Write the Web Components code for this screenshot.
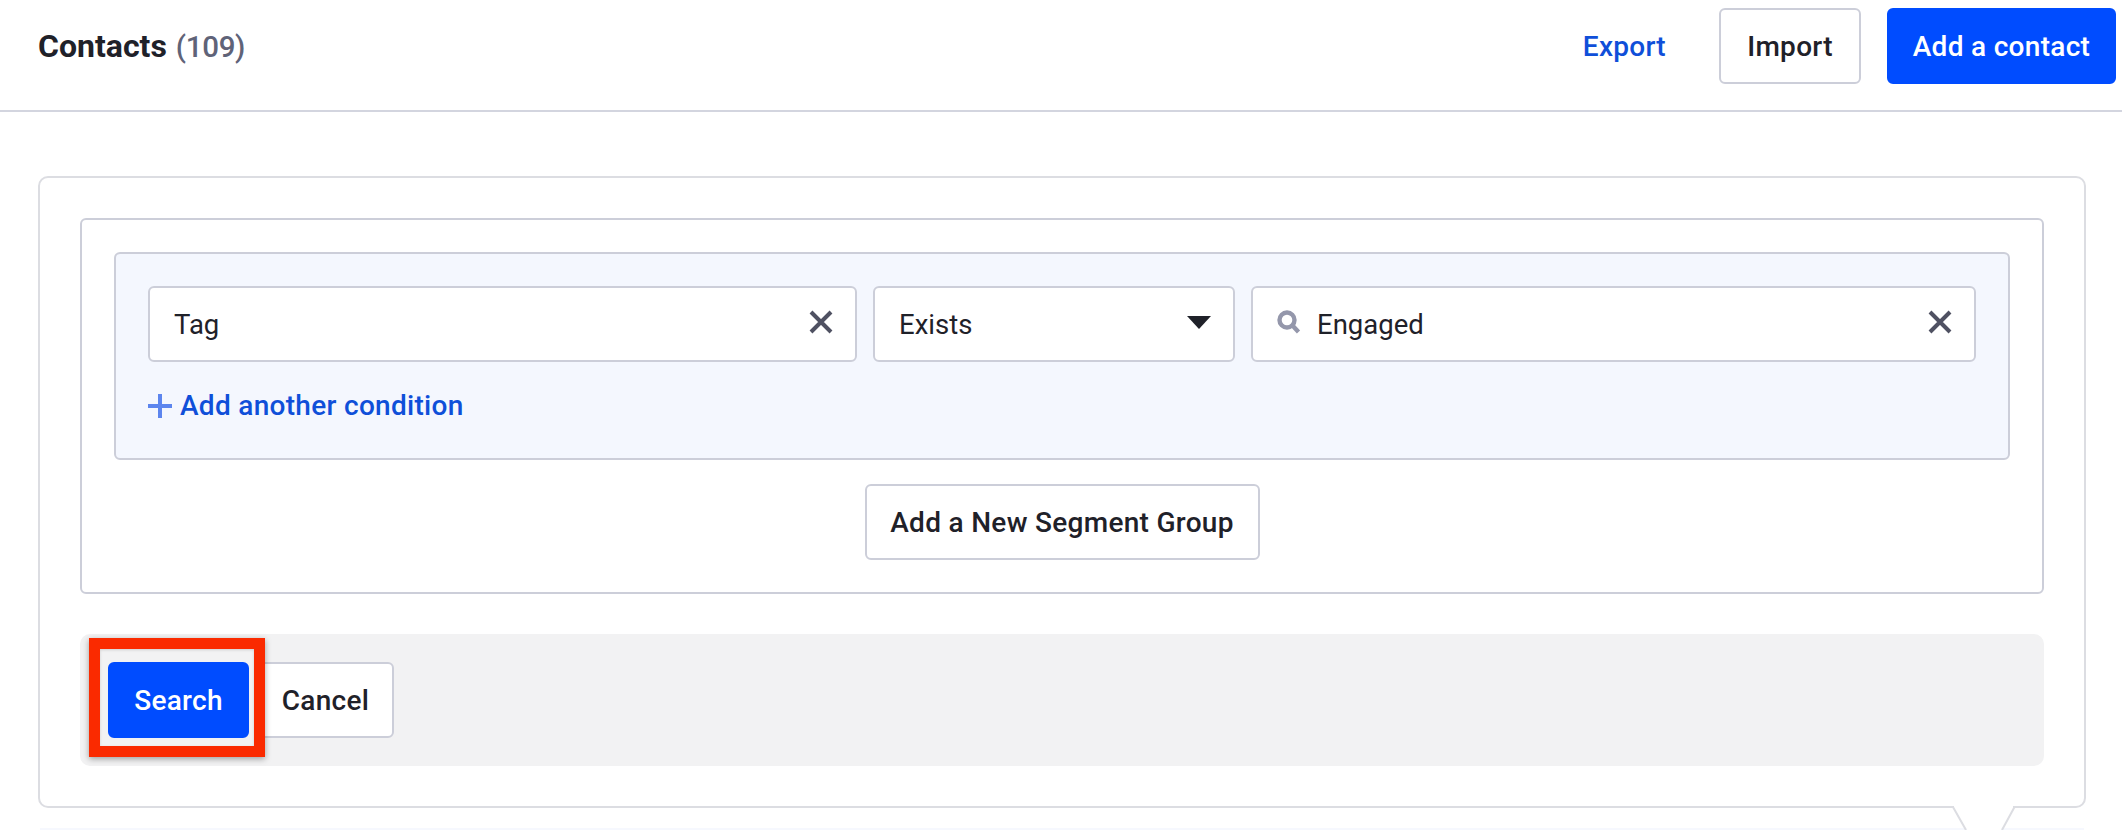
<!DOCTYPE html>
<html>
<head>
<meta charset="utf-8">
<style>
    html, body { margin: 0; background: #fff; }
    body { width: 2122px; height: 830px; overflow: hidden; font-family: "Roboto", "Liberation Sans", sans-serif; color: #1f2129; }
</style>
</head>
<body>
<contacts-page>
    <page-header slot="header"></page-header>
    <segment-panel slot="panel"></segment-panel>
</contacts-page>

<script>
const BUTTON_STYLES = `
    .btn {
        box-sizing: border-box;
        height: 76px;
        display: inline-flex;
        align-items: center;
        justify-content: center;
        border: 2px solid #ccced9;
        border-radius: 6px;
        background: #fff;
        color: #1f2129;
        font: 500 28px "Roboto", "Liberation Sans", sans-serif;
        letter-spacing: .3px;
    }
    .btn.primary { background: #004cff; border-color: #004cff; color: #fff; }
`;

class ContactsPage extends HTMLElement {
    constructor() {
        super();
        this.attachShadow( { mode: 'open' } );
        this.shadowRoot.innerHTML = `
            <style>
                :host { display: block; }
                .body { padding: 64px 0 0 0; }
                .next { height: 4px; margin: 20px 0 0 40px; width: 2044px; background: #f6f8fe; }
            </style>
            <slot name="header"></slot>
            <div class="body"><slot name="panel"></slot></div>
            <div class="next"></div>
        `;
    }
}

class PageHeader extends HTMLElement {
    constructor() {
        super();
        this.attachShadow( { mode: 'open' } );
        this.shadowRoot.innerHTML = `
            <style>
                :host {
                    display: flex;
                    box-sizing: border-box;
                    height: 112px;
                    align-items: flex-start;
                    justify-content: space-between;
                    padding: 8px 6px 0 38px;
                    border-bottom: 2px solid #d3d5df;
                }
                h1 { margin: 0; height: 76px; line-height: 76px; font-size: 32px; font-weight: 700; }
                h1 span { color: #5f6378; font-weight: 500; font-size: 29.5px; letter-spacing: -.3px; margin-left: 1px; }
                .actions { display: flex; align-items: center; }
                a { color: #0f4fd9; font-size: 28px; font-weight: 500; letter-spacing: .3px; margin-right: 53px; }
                .import { width: 142px; margin-right: 26px; }
                .add { width: 229px; }
                ${BUTTON_STYLES}
            </style>
            <h1>Contacts <span>(109)</span></h1>
            <div class="actions">
                <a>Export</a>
                <div class="btn import">Import</div>
                <div class="btn primary add">Add a contact</div>
            </div>
        `;
    }
}

class FieldBox extends HTMLElement {
    constructor() {
        super();
        this.attachShadow( { mode: 'open' } );
        this.shadowRoot.innerHTML = `
            <style>
                :host {
                    display: flex;
                    box-sizing: border-box;
                    height: 76px;
                    align-items: center;
                    gap: 16px;
                    padding: 0 22px 0 24px;
                    background: #fff;
                    border: 2px solid #ccced9;
                    border-radius: 6px;
                    font-size: 27.5px;
                    color: #1f2129;
                }
                .text { flex: 1; }
                ::slotted(svg) { flex: none; margin-bottom: 4px; }
            </style>
            <slot name="before"></slot>
            <div class="text"><slot></slot></div>
            <slot name="after"></slot>
        `;
    }
}

class SegmentPanel extends HTMLElement {
    constructor() {
        super();
        this.attachShadow( { mode: 'open' } );
        this.shadowRoot.innerHTML = `
            <style>
                :host {
                    display: block;
                    position: relative;
                    box-sizing: border-box;
                    width: 2048px;
                    height: 632px;
                    margin-left: 38px;
                    padding: 40px 40px 0 40px;
                    border: 2px solid #dcdde2;
                    border-radius: 10px;
                }
                .group {
                    box-sizing: border-box;
                    height: 376px;
                    padding: 32px 32px 0 32px;
                    border: 2px solid #ccced9;
                    border-radius: 6px;
                }
                .conditions {
                    box-sizing: border-box;
                    height: 208px;
                    padding: 32px 0 0 32px;
                    background: #f4f7fe;
                    border: 2px solid #ccced9;
                    border-radius: 6px;
                }
                .row { display: grid; grid-template-columns: 709px 362px 725px; gap: 16px; }
                .add-condition {
                    display: flex;
                    align-items: center;
                    gap: 8px;
                    margin-top: 27px;
                    color: #0f4fd9;
                    font-size: 28px;
                    font-weight: 500;
                    letter-spacing: .3px;
                }
                .center { display: flex; justify-content: center; margin-top: 24px; }
                .new-group { width: 395px; }
                .footer {
                    display: flex;
                    box-sizing: border-box;
                    height: 132px;
                    margin-top: 40px;
                    padding: 28px 0 0 28px;
                    background: #f2f2f3;
                    border-radius: 10px;
                }
                .search { width: 141px; }
                .cancel { width: 137px; margin-left: 8px; }
                .highlight {
                    position: absolute;
                    left: 49px;
                    top: 460px;
                    width: 176px;
                    height: 119px;
                    box-sizing: border-box;
                    border: 11px solid #fa2a00;
                    box-shadow: 0 2px 6px rgba(0, 0, 0, .35), inset 0 1px 3px rgba(0, 0, 0, .15);
                }
                .tail {
                    position: absolute;
                    left: 1912px;
                    top: 627px;
                }
                ${BUTTON_STYLES}
            </style>
            <div class="group">
                <div class="conditions">
                    <div class="row">
                        <field-box>Tag
                            <svg slot="after" width="24" height="24" viewBox="0 0 24 24"><path d="M2 2L22 22M22 2L2 22" stroke="#4f5162" stroke-width="4" fill="none"/></svg>
                        </field-box>
                        <field-box>Exists
                            <svg slot="after" width="24" height="13" viewBox="0 0 24 13"><path d="M0 0H24L12 13Z" fill="#1f2129"/></svg>
                        </field-box>
                        <field-box>
                            <svg slot="before" width="24" height="24" viewBox="0 0 24 24"><circle cx="10" cy="10" r="7.5" stroke="#9497ab" stroke-width="4.4" fill="none"/><path d="M15.5 15.5L21.5 22" stroke="#9497ab" stroke-width="4.4" fill="none"/></svg>
                            Engaged
                            <svg slot="after" width="24" height="24" viewBox="0 0 24 24"><path d="M2 2L22 22M22 2L2 22" stroke="#4f5162" stroke-width="4" fill="none"/></svg>
                        </field-box>
                    </div>
                    <div class="add-condition">
                        <svg width="24" height="26" viewBox="0 0 24 26"><path d="M12 1V25M0 13H24" stroke="#5c85ee" stroke-width="4" fill="none"/></svg>
                        <span>Add another condition</span>
                    </div>
                </div>
                <div class="center"><div class="btn new-group">Add a New Segment Group</div></div>
            </div>
            <div class="footer">
                <div class="btn primary search">Search</div>
                <div class="btn cancel">Cancel</div>
            </div>
            <div class="highlight"></div>
            <svg class="tail" width="64" height="25" viewBox="0 0 64 25"><path d="M2 0H61V3L49 25H15L2 3Z" fill="#fff"/><path d="M1 2L14 25M62.5 2L50 25" stroke="#dcdde2" stroke-width="2" fill="none"/></svg>
        `;
    }
}

customElements.define( 'contacts-page', ContactsPage );
customElements.define( 'page-header', PageHeader );
customElements.define( 'field-box', FieldBox );
customElements.define( 'segment-panel', SegmentPanel );
</script>
</body>
</html>
